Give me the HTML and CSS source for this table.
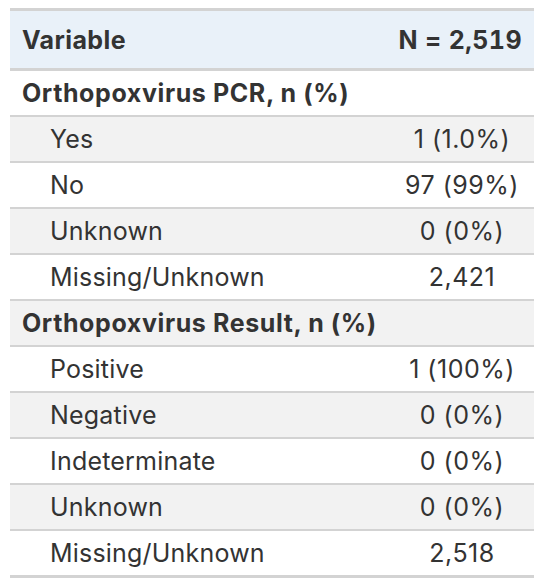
FILE: index.html
```html
<!DOCTYPE html>
<html>
<head>
<meta charset="utf-8">
<link rel="stylesheet" href="styles.css">
</head>
<body>
<div class="wrap">
<table class="summary">
  <thead>
    <tr><th class="col-label">Variable</th><th class="col-stat">N = 2,519</th></tr>
  </thead>
  <tbody>
    <tr class="group"><td>Orthopoxvirus PCR, n (%)</td><td></td></tr>
    <tr class="alt"><td class="lvl">Yes</td><td class="val">1 (1.0%)</td></tr>
    <tr><td class="lvl">No</td><td class="val">97 (99%)</td></tr>
    <tr class="alt"><td class="lvl">Unknown</td><td class="val">0 (0%)</td></tr>
    <tr><td class="lvl">Missing/Unknown</td><td class="val">2,421</td></tr>
    <tr class="group alt"><td>Orthopoxvirus Result, n (%)</td><td></td></tr>
    <tr><td class="lvl">Positive</td><td class="val">1 (100%)</td></tr>
    <tr class="alt"><td class="lvl">Negative</td><td class="val">0 (0%)</td></tr>
    <tr><td class="lvl">Indeterminate</td><td class="val">0 (0%)</td></tr>
    <tr class="alt"><td class="lvl">Unknown</td><td class="val">0 (0%)</td></tr>
    <tr class="last"><td class="lvl">Missing/Unknown</td><td class="val">2,518</td></tr>
  </tbody>
</table>
</div>
</body>
</html>
```
FILE: styles.css
```css
html, body {
  margin: 0;
  padding: 0;
  background: #ffffff;
}
.wrap {
  padding: 8px 8px 0 10px;
}
.summary {
  width: 524px;
  border-collapse: collapse;
  font-family: Inter, "Liberation Sans", sans-serif;
  font-size: 25px;
  color: #333333;
  table-layout: fixed;
}
.summary th {
  height: 57px;
  padding: 0 12px;
  background: #e9f1f9;
  border-top: 3px solid #d3d3d3;
  border-bottom: 3px solid #d3d3d3;
  font-weight: 700;
  letter-spacing: 0.4px;
  white-space: nowrap;
  box-sizing: content-box;
}
.summary .col-label {
  text-align: left;
  width: 356px;
}
.summary .col-stat {
  text-align: right;
  padding-left: 0;
  font-variant-numeric: tabular-nums;
}
.summary td {
  height: 44px;
  padding: 0 12px;
  border-bottom: 2px solid #d3d3d3;
  white-space: nowrap;
}
.summary .group td {
  font-weight: 700;
  letter-spacing: 0.6px;
}
.summary .alt td {
  background: #f2f2f2;
}
.summary .lvl {
  padding-left: 40px;
  letter-spacing: 0.2px;
}
.summary .val {
  text-align: center;
  letter-spacing: 0.5px;
}
.summary .last td {
  border-bottom: 3px solid #d3d3d3;
}
```
